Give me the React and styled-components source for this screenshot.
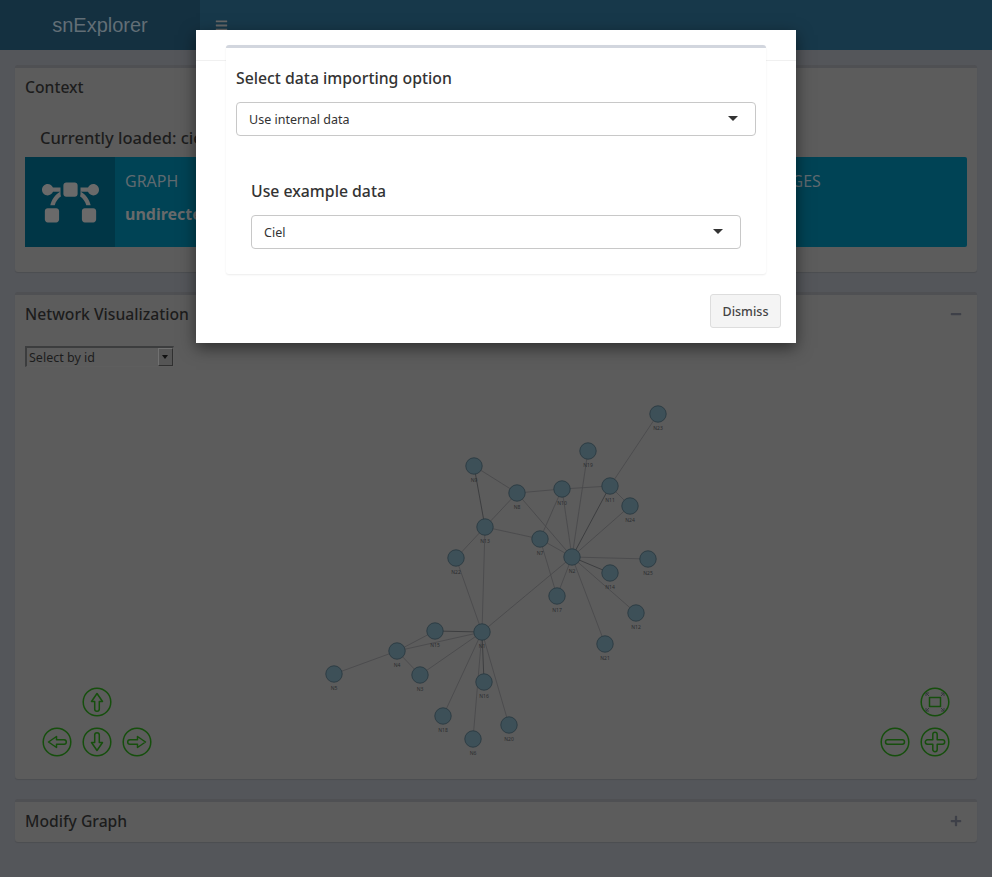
import React from 'react'
import styled, { createGlobalStyle } from 'styled-components'
import { FaBars, FaBezierCurve, FaMinus, FaPlus } from 'react-icons/fa'

const GlobalStyle = createGlobalStyle`
    html, body, #root {
        margin: 0;
        height: 100%;
    }
    body {
        background: #54565a;
        font-family: "Noto Sans", "Open Sans", sans-serif;
        overflow: hidden;
    }
`

const NODES = {
    N1: [482, 632], N2: [572, 557], N3: [420, 675], N4: [397, 651], N5: [334, 674],
    N6: [473, 739], N7: [540, 539], N8: [517, 493], N9: [474, 466], N10: [562, 489],
    N11: [610, 486], N12: [636, 613], N13: [485, 527], N14: [610, 573], N15: [435, 631],
    N16: [484, 682], N17: [557, 596], N18: [443, 716], N19: [588, 451], N20: [509, 725],
    N21: [605, 644], N22: [456, 558], N23: [658, 414], N24: [630, 506], N25: [648, 559],
}

const EDGES = [
    ['N23', 'N11'], ['N19', 'N2'], ['N9', 'N8'], ['N9', 'N13', 1], ['N8', 'N13'], ['N8', 'N10'],
    ['N8', 'N2'], ['N10', 'N11'], ['N10', 'N7'], ['N10', 'N2'], ['N11', 'N24'], ['N11', 'N2', 1],
    ['N24', 'N2'], ['N13', 'N7'], ['N13', 'N22'], ['N13', 'N1'], ['N7', 'N2'], ['N7', 'N17'],
    ['N2', 'N25'], ['N2', 'N14', 1], ['N2', 'N12'], ['N2', 'N17'], ['N2', 'N21'], ['N2', 'N1'],
    ['N22', 'N1'], ['N1', 'N15', 1], ['N1', 'N4'], ['N1', 'N3'], ['N1', 'N16', 1], ['N1', 'N18'],
    ['N1', 'N6'], ['N1', 'N20'], ['N15', 'N4'], ['N4', 'N3'], ['N4', 'N5'],
]

function NavIcon({ x, y, children }) {
    return (
        <NavButton style={{ left: x - 15, top: y - 15 }} viewBox="0 0 30 30">
            <circle cx="15" cy="15" r="13.8" />
            {children}
        </NavButton>
    )
}

function Network() {
    return (
        <GraphCanvas viewBox="0 0 992 877">
            {EDGES.map(([a, b, heavy]) => (
                <line
                    key={a + b}
                    x1={NODES[a][0]}
                    y1={NODES[a][1]}
                    x2={NODES[b][0]}
                    y2={NODES[b][1]}
                    stroke={heavy ? '#3d3e40' : '#47484a'}
                    strokeWidth={heavy ? 1 : 0.8}
                />
            ))}
            {Object.entries(NODES).map(([id, [x, y]]) => (
                <g key={id}>
                    <circle cx={x} cy={y} r="8.2" fill="#3d5058" stroke="#2a3a42" strokeWidth="0.9" />
                    <text x={x} y={y + 16} textAnchor="middle" fontSize="5" fill="#2b2d2f">{id}</text>
                </g>
            ))}
        </GraphCanvas>
    )
}

function App() {
    return (
        <Page>
            <GlobalStyle />
            <Header>
                <Logo>snExplorer</Logo>
                <Toggle><FaBars size={13} /></Toggle>
            </Header>
            <Content>
                <Box>
                    <BoxHeader><BoxTitle>Context</BoxTitle></BoxHeader>
                    <BoxBody>
                        <Loaded>Currently loaded: ciel</Loaded>
                        <InfoRow>
                            <InfoBox>
                                <InfoIcon><FaBezierCurve size={57} /></InfoIcon>
                                <InfoText>
                                    <InfoLabel>Graph</InfoLabel>
                                    <InfoValue>undirected</InfoValue>
                                </InfoText>
                            </InfoBox>
                            <InfoBox />
                            <InfoBox>
                                <InfoIcon />
                                <InfoText>
                                    <InfoLabel>Edges</InfoLabel>
                                </InfoText>
                            </InfoBox>
                        </InfoRow>
                    </BoxBody>
                </Box>

                <NetworkBox>
                    <BoxHeader>
                        <BoxTitle>Network Visualization</BoxTitle>
                        <BoxTool><FaMinus size={12} /></BoxTool>
                    </BoxHeader>
                    <NetworkBody>
                        <IdSelect>
                            <span>Select by id</span>
                            <IdSelectButton />
                        </IdSelect>
                    </NetworkBody>
                </NetworkBox>

                <Box>
                    <BoxHeader>
                        <BoxTitle>Modify Graph</BoxTitle>
                        <BoxTool><FaPlus size={12} /></BoxTool>
                    </BoxHeader>
                </Box>
            </Content>

            <Network />

            <NavIcon x={97} y={702}>
                <path d="M15 6.500l5.500 8h-3.200v7.500a2.300 2.300 0 0 1-4.600 0v-7.500H9.500z" />
            </NavIcon>
            <NavIcon x={97} y={742}>
                <path d="M15 23.500l5.500-8h-3.200V8a2.300 2.300 0 0 0-4.600 0v7.500H9.500z" />
            </NavIcon>
            <NavIcon x={57} y={742}>
                <path d="M6.500 15l8-5.500v3.200H22a2.300 2.300 0 0 1 0 4.600h-7.500v3.200z" />
            </NavIcon>
            <NavIcon x={137} y={742}>
                <path d="M23.500 15l-8-5.500v3.200H8a2.300 2.300 0 0 0 0 4.600h7.500v3.200z" />
            </NavIcon>
            <NavIcon x={935} y={702}>
                <rect x="9.500" y="10.500" width="11" height="9" />
                <CornerArrows d="M6 6l3 3M6 6h3M6 6v3M24 6l-3 3M24 6h-3M24 6v3M6 24l3-3M6 24h3M6 24v-3M24 24l-3-3M24 24h-3M24 24v-3" />
            </NavIcon>
            <NavIcon x={895} y={742}>
                <rect x="5.500" y="12.800" width="19" height="4.400" rx="2.200" />
            </NavIcon>
            <NavIcon x={935} y={742}>
                <path d="M12.800 7.500a2.200 2.200 0 0 1 4.400 0v5.300h5.300a2.200 2.200 0 0 1 0 4.400h-5.300v5.300a2.200 2.200 0 0 1-4.400 0v-5.300H7.500a2.200 2.200 0 0 1 0-4.400h5.300z" />
            </NavIcon>

            <Modal>
                <ModalHeader />
                <ModalBody>
                    <ModalCard>
                        <FieldTitle>Select data importing option</FieldTitle>
                        <Dropdown>Use internal data</Dropdown>
                        <NestedField>
                            <FieldTitle>Use example data</FieldTitle>
                            <Dropdown>Ciel</Dropdown>
                        </NestedField>
                    </ModalCard>
                </ModalBody>
                <ModalFooter>
                    <DismissButton>Dismiss</DismissButton>
                </ModalFooter>
            </Modal>
        </Page>
    )
}

export default App

const Page = styled.div`
    position: relative;
    height: 100%;
    overflow: hidden;
`

const Header = styled.header`
    display: flex;
    align-items: center;
    height: 50px;
    background: #17384a;
`

const Logo = styled.div`
    width: 200px;
    height: 100%;
    display: flex;
    align-items: center;
    justify-content: center;
    background: #143040;
    color: #626e76;
    font-family: "Liberation Sans", Arial, sans-serif;
    font-size: 20px;
`

const Toggle = styled.div`
    display: flex;
    padding-left: 15px;
    color: #666;
`

const Content = styled.main`
    padding: 15px;
`

const Box = styled.section`
    background: #5c5c5c;
    border-top: 3px solid #4f5053;
    border-radius: 3px;
    margin-bottom: 20px;
    box-shadow: 0 1px 1px rgba(0, 0, 0, 0.1);
`

const NetworkBox = styled(Box)`
    height: 484px;
`

const BoxHeader = styled.div`
    display: flex;
    align-items: center;
    justify-content: space-between;
    padding: 9px 10px 11px;
    height: 20px;
`

const BoxTitle = styled.h3`
    margin: 0;
    font-size: 15.7px;
    font-weight: 500;
    color: #1c1c1c;
    line-height: 20px;
`

const BoxTool = styled.div`
    display: flex;
    margin-right: 5px;
    color: #3e4048;
`

const BoxBody = styled.div`
    padding: 10px;
`

const Loaded = styled.h4`
    margin: 0 0 9px;
    padding: 10px 15px 0;
    font-size: 16.5px;
    font-weight: 500;
    line-height: 20px;
    color: #1c1c1c;
    white-space: nowrap;
`

const InfoRow = styled.div`
    display: grid;
    grid-template-columns: 323px 323px 296px;
    margin-bottom: 15px;
    border-radius: 2px;
    background: #004355;
`

const InfoBox = styled.div`
    display: flex;
    height: 90px;
`

const InfoIcon = styled.div`
    width: 90px;
    display: flex;
    align-items: center;
    justify-content: center;
    background: #003646;
    color: #6a6a6a;
`

const InfoText = styled.div`
    padding: 14px 10px;
    color: #5f6a70;
`

const InfoLabel = styled.div`
    font-size: 16px;
    line-height: 20px;
    text-transform: uppercase;
`

const InfoValue = styled.div`
    margin-top: 13px;
    font-size: 16px;
    font-weight: 700;
    line-height: 20px;
    color: #686a6b;
`

const NetworkBody = styled.div`
    padding: 11px 10px;
`

const IdSelect = styled.div`
    display: flex;
    align-items: center;
    justify-content: space-between;
    box-sizing: border-box;
    width: 149px;
    height: 21px;
    padding-left: 2px;
    border-top: 2px solid #3c3d3e;
    border-left: 2px solid #3c3d3e;
    border-right: 1px solid #5e5e5e;
    border-bottom: 1px solid #5e5e5e;
    font-size: 12.5px;
    color: #1c1c1c;
`

const IdSelectButton = styled.div`
    position: relative;
    box-sizing: border-box;
    width: 15px;
    height: 18px;
    background: #555;
    border: 1px solid;
    border-color: #707070 #303030 #303030 #707070;

    &:after {
        content: "";
        position: absolute;
        left: 3px;
        top: 6px;
        border: 3.5px solid transparent;
        border-top: 4px solid #111;
    }
`

const GraphCanvas = styled.svg`
    position: absolute;
    left: 0;
    top: 0;
    width: 992px;
    height: 877px;
`

const NavButton = styled.svg`
    position: absolute;
    width: 30px;
    height: 30px;
    fill: none;
    stroke: #164f0d;
    stroke-width: 1.5;
    stroke-linejoin: round;
`

const CornerArrows = styled.path`
    stroke: #34383d;
    stroke-width: 1;
`

const Modal = styled.div`
    position: absolute;
    left: 196px;
    top: 30px;
    width: 600px;
    background: #fff;
    box-shadow: 0 5px 15px rgba(0, 0, 0, 0.5);
    color: #333;
`

const ModalHeader = styled.div`
    height: 30px;
    border-bottom: 1px solid #f0f0f0;
`

const ModalBody = styled.div`
    padding: 0 30px;
`

const ModalCard = styled.div`
    position: relative;
    margin-top: -16px;
    padding: 20px 10px 25px;
    background: #fff;
    border-top: 3px solid #d2d6de;
    border-radius: 3px;
    box-shadow: 0 1px 2px rgba(0, 0, 0, 0.08);
`

const FieldTitle = styled.h4`
    margin: 0 0 14px;
    font-size: 15.8px;
    font-weight: 500;
    line-height: 20px;
    color: #333;
`

const NestedField = styled.div`
    margin-top: 45px;
    padding: 0 15px;
`

const Dropdown = styled.div`
    position: relative;
    box-sizing: border-box;
    height: 34px;
    padding: 0 12px;
    display: flex;
    align-items: center;
    border: 1px solid #c8c8c8;
    border-radius: 4px;
    font-size: 12.5px;
    color: #333;

    &:after {
        content: "";
        position: absolute;
        right: 17px;
        top: 13px;
        border: 5px solid transparent;
        border-top-color: #333;
    }
`

const ModalFooter = styled.div`
    display: flex;
    justify-content: flex-end;
    padding: 20px 15px 15px;
`

const DismissButton = styled.button`
    box-sizing: border-box;
    width: 71px;
    height: 34px;
    padding: 0;
    font-family: inherit;
    font-size: 12.5px;
    font-weight: 500;
    color: #444;
    background: #f4f4f4;
    border: 1px solid #ddd;
    border-radius: 3px;
`
